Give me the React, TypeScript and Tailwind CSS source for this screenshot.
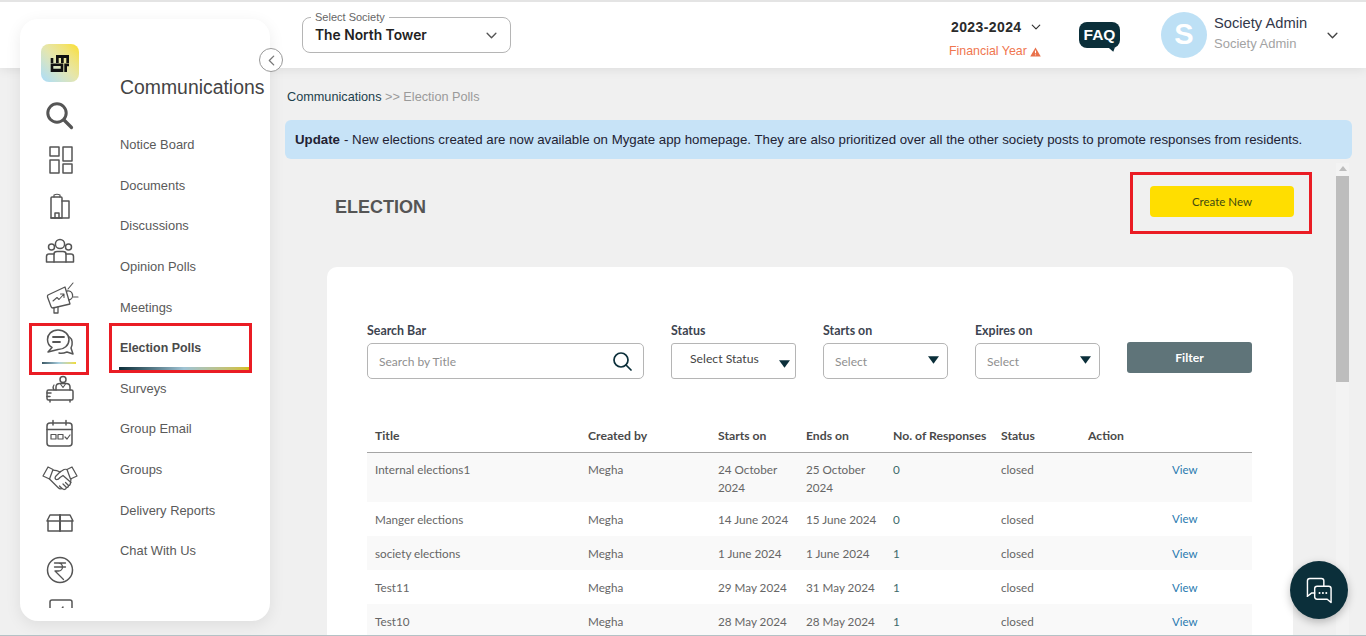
import React from "react";

const S = ({ children, sw = 1.5 }: { children: React.ReactNode; sw?: number }) => (
  <svg viewBox="0 0 40 40" className="w-10 h-10" fill="none" stroke="#555555" strokeWidth={sw} strokeLinecap="round" strokeLinejoin="round">
    {children}
  </svg>
);

const icons: React.ReactNode[] = [
  <S key="search">
    <circle cx="17" cy="18" r="9.2" strokeWidth={3} />
    <path d="M24 25 L31.500 32.500" strokeWidth={3.2} />
  </S>,
  <S key="grid">
    <rect x="10" y="7" width="9" height="9" />
    <rect x="23" y="7" width="9" height="14" />
    <rect x="10" y="20" width="9" height="13" />
    <rect x="23" y="24" width="9" height="9" />
  </S>,
  <S key="building">
    <path d="M11 32 V12 Q11 11 12 11 H21 Q22 11 22 12 V32 Z" />
    <path d="M22 15 H29 V32 H11" />
    <path d="M14 11 V9 Q17 7.500 20 9 V11" strokeWidth={1.2} />
    <path d="M15 32 V27 H19 V32" />
  </S>,
  <S key="people">
    <circle cx="20" cy="13" r="4.6" />
    <circle cx="11.500" cy="16" r="3" />
    <circle cx="28.500" cy="16" r="3" />
    <path d="M14 31 V23 Q14 20.500 17 20.500 H23 Q26 20.500 26 23 V31" />
    <path d="M14 23 H9 Q6.500 23 6.500 25.500 V31 H33.500 V25.500 Q33.500 23 31 23 H26" />
  </S>,
  <S key="mega" sw={1.3}>
    <path d="M8 18 L25 10 L30 27 L13 31 Q11.500 31 11 29.500 L7.500 20 Q7.300 18.600 8 18 Z" />
    <path d="M14 30.500 V36 H18 V30" />
    <path d="M13 24 L17 20.500 L19 22.500 L23.500 17.500 M20.500 17 H24 V20.500" strokeWidth={1.1} />
    <path d="M27 14 A4 4 0 0 1 29 23" />
    <path d="M33 6 L28 12 M33 20 H38" strokeWidth={1.1} />
  </S>,
  <S key="chat">
    <path d="M18 8 C11.500 8 7.500 12.500 7.500 17.500 C7.500 21 9.500 24 12 25.500 L8 30 L18 27.500 C24 27.500 29 23.500 29 17.500 C29 12.500 24.500 8 18 8 Z" />
    <path d="M13 15 H24 M13 20 H20" strokeWidth={1.8} />
    <path d="M29.500 15 C32.500 17 33 22 31 26 L33 32 L27 30 Q22 32 19 31" />
  </S>,
  <S key="desk">
    <circle cx="23" cy="11.500" r="3" />
    <path d="M16 22 V19 Q16 15.500 20 15.500 H26 Q30 15.500 30 19 V22" />
    <path d="M20.500 16 L23 19.500 L25.500 16" strokeWidth={1.1} />
    <path d="M14 22 Q12 19.500 14 17" strokeWidth={1.2} />
    <rect x="7" y="22" width="26" height="10" rx="1.500" />
    <path d="M7 25 H11 M7 28.500 H10 M10 32 V34 M30 32 V34" />
  </S>,
  <S key="cal">
    <rect x="7" y="10" width="25" height="23" rx="3" />
    <path d="M7 16.500 H32 M13 7.500 V12 M26 7.500 V12" />
    <rect x="11" y="21.500" width="5" height="4.500" strokeWidth={1.2} />
    <rect x="18" y="21.500" width="5" height="4.500" strokeWidth={1.2} />
    <path d="M25 24 L27 26 L30 22" strokeWidth={1.2} />
  </S>,
  <S key="hand" sw={1.25}>
    <path d="M3 17 L8 8 L13 10.500 L9.500 20 Z" />
    <path d="M37 17 L32 8 L27 10.500 L30.500 20 Z" />
    <path d="M13 11 Q17 11 20 13 L24 10.500 Q26 10 27 10.500" />
    <path d="M20.500 12.500 L15.500 17.500 Q14.500 19.500 16 20.500 Q18 21 20 18.500 L23 16.500 L31 23.500" />
    <path d="M9.500 20 L18 28.500 Q20 30.500 22 29.500 L24 30.500 Q26 30.500 26.500 28.500 Q28.500 28.500 28.500 26.500 Q30.500 26.500 30.500 23.500 L31 20" />
    <path d="M22 29.500 L19.500 27 M26.500 28.500 L23 25 M28.500 26.500 L25.500 23.500" />
  </S>,
  <S key="box">
    <path d="M8 17 V27 H32 V17" />
    <path d="M10 11 H30 L33 17 H7 Z" />
    <path d="M20 11 V27" strokeWidth={2} />
  </S>,
  <S key="rupee">
    <circle cx="20" cy="20" r="12.500" />
    <path d="M14.500 13 H25.500 M14.500 17 H25.500 M16 13 H18.500 A4 4 0 0 1 18.500 21 H15 L23.500 29.500" strokeWidth={1.3} />
  </S>,
  <S key="last">
    <rect x="10" y="5" width="22" height="22" rx="2" />
    <path d="M23 12 L21 15" />
  </S>,
];

const menu = ["Notice Board", "Documents", "Discussions", "Opinion Polls", "Meetings", "Election Polls", "Surveys", "Group Email", "Groups", "Delivery Reports", "Chat With Us"];

const rows = [
  ["Internal elections1", "Megha", "24 October 2024", "25 October 2024", "0"],
  ["Manger elections", "Megha", "14 June 2024", "15 June 2024", "0"],
  ["society elections", "Megha", "1 June 2024", "1 June 2024", "1"],
  ["Test11", "Megha", "29 May 2024", "31 May 2024", "1"],
  ["Test10", "Megha", "28 May 2024", "28 May 2024", "1"],
];

const Chevron = ({ className }: { className: string }) => (
  <svg viewBox="0 0 12 8" className={className} fill="none" stroke="currentColor" strokeWidth={1.6} strokeLinecap="round" strokeLinejoin="round">
    <path d="M1 1.500 L6 6.500 L11 1.500" />
  </svg>
);

const Caret = () => (
  <svg viewBox="0 0 10 7" className="w-[11px] h-[8px]" fill="#0b2f3a"><path d="M0 0 H10 L5 7 Z" /></svg>
);

export default function App() {
  return (
    <div className="relative h-[636px] w-[1366px] overflow-hidden bg-[#f0f0f0] border-t-2 border-t-[#e4e4e4] border-b border-b-[#b4c2c6] font-['Liberation_Sans',sans-serif]">
      {/* Header */}
      <header className="h-[66px] bg-white shadow-[0_2px_10px_rgba(0,0,0,0.08)] flex items-center pl-[302px] relative">
        <div className="relative w-[209px] h-[36px] border border-[#b5b5b5] rounded-lg flex items-center justify-between pl-3 pr-[13px]">
          <span className="absolute -top-[7px] left-[8px] bg-white px-1 text-[11px] leading-[12px] text-[#666666]">Select Society</span>
          <span className="text-[13.800px] font-semibold text-[#222222] font-['Inter',sans-serif]">The North Tower</span>
          <Chevron className="w-[11px] h-[7px] text-[#555555]" />
        </div>
        <div className="ml-[438px] w-[100px] h-full flex flex-col pt-[16px]">
          <div className="flex items-center pl-[2px]">
            <span className="text-[14px] leading-[18px] font-bold tracking-[0.4px] text-[#2b2b2b]">2023-2024</span>
            <Chevron className="w-[10px] h-[6px] ml-[9px] text-[#333333]" />
          </div>
          <div className="flex items-center mt-[8px]">
            <span className="text-[12.400px] leading-[15px] text-[#f0764f]">Financial Year</span>
            <svg viewBox="0 0 12 11" className="w-[11px] h-[10px] ml-[3px]">
              <path d="M6 0.500 L11.800 10.500 H0.200 Z" fill="#e9704a" />
              <path d="M6 3.800 V7 M6 8.300 V9.200" stroke="#fff" strokeWidth={1.200} />
            </svg>
          </div>
        </div>
        <div className="relative ml-[30px] w-[41px] h-[26px] bg-[#0b2f3a] rounded-lg flex items-center justify-center text-white text-[15.500px] font-bold">
          FAQ
          <svg viewBox="0 0 8 5" className="absolute -bottom-[4px] right-[5px] w-[7px] h-[5px]"><path d="M0 0 H8 L6 5 Z" fill="#0b2f3a" /></svg>
        </div>
        <div className="ml-[41px] w-[46px] h-[46px] rounded-full bg-[#bde0f5] flex items-center justify-center text-white text-[29px] font-bold">S</div>
        <div className="ml-[7px] w-[113px] flex flex-col -mt-[4px]">
          <span className="text-[14.700px] leading-[18px] text-[#33384a]">Society Admin</span>
          <span className="text-[13px] leading-[16px] mt-[4px] text-[#a3a3a3]">Society Admin</span>
        </div>
        <Chevron className="w-[11px] h-[7px] text-[#444444]" />
      </header>

      {/* Floating sidebar */}
      <aside className="absolute left-[20px] top-[17px] w-[250px] h-[602px] bg-white rounded-[18px] shadow-[0_4px_16px_rgba(0,0,0,0.08)] flex z-10">
        <div className="w-[78px] h-[589px] overflow-hidden flex flex-col items-center pt-[25px] shrink-0 ml-[1px]">
          <div className="relative w-[38px] h-[38px] rounded-lg bg-gradient-to-tr from-[#a9dcfb] via-[#e5e6ae] to-[#fbdf0d] shrink-0">
            <svg viewBox="0 0 38 38" className="w-full h-full" fill="#111111">
              <path d="M9.700 14 H12.300 V19 H9.700 Z" />
              <path d="M15 11 H28 V19 H25.300 V14 H22.700 V19 H20 V14 H17.700 V19 H15 Z" />
              <path d="M9.700 19.500 H22.300 V28 H9.700 Z M12.300 22 V24.700 H19.700 V22 Z" fillRule="evenodd" />
              <path d="M23.300 19.500 H28 V22.300 H26 V28 H23.300 Z" />
            </svg>
          </div>
          <div className="mt-[10px] flex flex-col items-center shrink-0">
            {icons.map((icon, i) => (
              <div key={i} className="relative h-[45.500px] w-[60px] flex items-center justify-center shrink-0">
                {icon}
                {i === 5 && <div className="absolute left-[12px] bottom-[1px] w-[34px] h-[2px] bg-gradient-to-r from-[#3d5a66] via-[#a9cfe0] to-[#f0dc2c]" />}
              </div>
            ))}
          </div>
        </div>
        <div className="flex-1 min-w-0 pt-[56px] pl-[21px]">
          <h2 className="text-[19.400px] leading-[24px] text-[#444444] mb-[25.600px] whitespace-nowrap">Communications</h2>
          <ul className="flex flex-col">
            {menu.map((m) => (
              <li key={m} className="h-[40.600px] flex items-center">
                <span className={m === "Election Polls" ? "text-[12.400px] font-bold text-[#4a4a4a]" : "text-[12.900px] text-[#5a5a5a]"}>{m}</span>
              </li>
            ))}
          </ul>
        </div>
        {/* Red highlight boxes */}
        <div className="absolute left-[9px] top-[304px] w-[60px] h-[52px] border-[3px] border-[#ea1c24]" />
        <div className="absolute left-[89px] top-[304px] w-[143px] h-[50px] border-[3px] border-[#ea1c24]">
          <div className="absolute left-[7px] right-0 bottom-0 h-[3px] bg-gradient-to-r from-[#0b2f3a] via-[#9fc3d4] to-[#d4be10]" />
        </div>
        {/* Collapse */}
        <button className="absolute left-[239px] top-[29px] w-6 h-6 rounded-full bg-white border border-[#999999] flex items-center justify-center">
          <svg viewBox="0 0 8 12" className="w-[7px] h-[11px]" fill="none" stroke="#777777" strokeWidth={1.500} strokeLinecap="round" strokeLinejoin="round"><path d="M6.500 1 L1.500 6 L6.500 11" /></svg>
        </button>
      </aside>

      {/* Main */}
      <main className="pl-[285px] pr-[14px] h-[567px] flex flex-col">
        <div className="pl-[2px] pt-[19px] text-[12.700px] leading-[20px] text-[#1c3f4c] whitespace-nowrap">
          Communications <span className="text-[#9a9a9a]">&gt;&gt; Election Polls</span>
        </div>
        <div className="mt-[13px] h-[39px] bg-[#c7e3f7] rounded-md flex items-center pl-[10px] text-[13.270px] text-[#222233] whitespace-nowrap">
          <span className="font-bold mr-1">Update</span> - New elections created are now available on Mygate app homepage. They are also prioritized over all the other society posts to promote responses from residents.
        </div>
        <div className="flex-1 min-h-0 flex pr-[3px] mt-[4px]">
          <div className="flex-1 min-w-0 overflow-hidden font-['Lato',sans-serif]">
            <div className="flex items-center justify-between mt-[9px] pl-[50px] pr-[24px] h-[62px]">
              <h1 className="mt-[9px] text-[18px] font-bold text-[#555555] font-['Liberation_Sans',sans-serif]">ELECTION</h1>
              <div className="w-[182px] h-[62px] border-[3px] border-[#ea1c24] flex items-start justify-center pt-[11px] pl-[2px]">
                <button className="w-[144px] h-[31px] bg-[#ffde00] rounded text-[11.500px] text-[#3f4a10]">Create New</button>
              </div>
            </div>
            <section className="ml-[42px] mr-[43px] mt-[33px] bg-white rounded-[10px] pl-[40px] pr-[41px] pt-[56px] h-[500px]">
              <div className="flex text-[12.400px]">
                <div className="w-[277px]">
                  <label className="block font-bold text-[#3d4450] leading-[16px] mb-[4px]">Search Bar</label>
                  <div className="h-[36px] border border-[#b5b5b5] rounded-[5px] flex items-center justify-between pl-[11px] pr-[11px]">
                    <input placeholder="Search by Title" className="outline-none bg-transparent w-[200px] pt-[2px] text-[12px] placeholder:text-[#8f8f8f]" />
                    <svg viewBox="0 0 20 20" className="w-[20px] h-[20px] -mt-[1px]" fill="none" stroke="#0b2f3a" strokeWidth={1.700} strokeLinecap="round"><circle cx="9" cy="9" r="7" /><path d="M14 14 L19 19" /></svg>
                  </div>
                </div>
                <div className="w-[125px] ml-[27px]">
                  <label className="block font-bold text-[#3d4450] leading-[16px] mb-[4px]">Status</label>
                  <div className="relative h-[36px] border border-[#b5b5b5] rounded-[3px] flex items-start pt-[6px] pl-[18px] text-[12.200px] text-[#444444]">
                    Select Status
                    <span className="absolute right-[5px] top-[16px]"><Caret /></span>
                  </div>
                </div>
                <div className="w-[125px] ml-[27px]">
                  <label className="block font-bold text-[#3d4450] leading-[16px] mb-[4px]">Starts on</label>
                  <div className="h-[36px] border border-[#b5b5b5] rounded-[5px] flex items-center justify-between pl-[11px] pr-[8px] text-[12px] text-[#8f8f8f]">
                    <span className="pt-[2px]">Select</span>
                    <span className="-mt-[3px]"><Caret /></span>
                  </div>
                </div>
                <div className="w-[125px] ml-[27px]">
                  <label className="block font-bold text-[#3d4450] leading-[16px] mb-[4px]">Expires on</label>
                  <div className="h-[36px] border border-[#b5b5b5] rounded-[5px] flex items-center justify-between pl-[11px] pr-[8px] text-[12px] text-[#8f8f8f]">
                    <span className="pt-[2px]">Select</span>
                    <span className="-mt-[3px]"><Caret /></span>
                  </div>
                </div>
                <button className="ml-[27px] mt-[19px] w-[125px] h-[31px] pt-[2px] bg-[#5f7479] rounded-[3px] text-white font-bold text-[12.200px]">Filter</button>
              </div>
              <table className="mt-[41px] w-[885px] table-fixed text-[11.700px] leading-[18px] text-left">
                <colgroup>
                  <col className="w-[213px]" /><col className="w-[130px]" /><col className="w-[88px]" /><col className="w-[87px]" /><col className="w-[108px]" /><col className="w-[87px]" /><col className="w-[84px]" /><col className="w-[88px]" />
                </colgroup>
                <thead>
                  <tr className="border-b border-[#a5a5a5] text-[#4a4a4a]">
                    {["Title", "Created by", "Starts on", "Ends on", "No. of Responses", "Status", "Action", ""].map((h, i) => (
                      <th key={i} className="pl-2 pr-0 pb-[7px] pt-[7px] text-[12.200px] font-bold whitespace-nowrap">{h}</th>
                    ))}
                  </tr>
                </thead>
                <tbody className="text-[#666666]">
                  {rows.map((r, i) => {
                    const pad = i === 0 ? "pl-2 pt-[7px] pb-[6px]" : "pl-2 py-[8px]";
                    const viewPad = i === 0 ? "pl-2 pt-[8px] pb-[5px]" : i === 1 ? "pl-2 py-[8px]" : "pl-2 pt-[9px] pb-[7px]";
                    return (
                      <tr key={i} className={i % 2 === 0 ? "bg-[#f9f9f9] align-top" : "bg-white align-top"}>
                        <td className={pad}>{r[0]}</td>
                        <td className={pad}>{r[1]}</td>
                        <td className={pad}>{r[2]}</td>
                        <td className={pad}>{r[3]}</td>
                        <td className={pad + " text-[#3d6a6a]"}>{r[4]}</td>
                        <td className={pad}>closed</td>
                        <td className={pad} />
                        <td className={viewPad + " text-[#2a7ab0] text-[11.500px]"}>View</td>
                      </tr>
                    );
                  })}
                </tbody>
              </table>
            </section>
          </div>
          <div className="w-[13px] shrink-0 flex flex-col items-center bg-[#f3f3f3]">
            <svg viewBox="0 0 8 5" className="w-[8px] h-[5px] mt-[3px]"><path d="M4 0 L8 5 H0 Z" fill="#bdbdbd" /></svg>
            <div className="w-full h-[206px] mt-[5px] bg-[#bdbdbd]" />
          </div>
        </div>
      </main>

      {/* Chat bubble */}
      <button className="absolute left-[1290px] top-[559px] w-[58px] h-[58px] rounded-full bg-[#0b2f3a] shadow-[0_3px_8px_rgba(0,0,0,0.25)] flex items-center justify-center z-20">
        <svg viewBox="0 0 28 28" className="w-[27px] h-[27px]" fill="none" stroke="#ffffff" strokeWidth={1.500} strokeLinecap="round" strokeLinejoin="round">
          <path d="M1.500 20 V4 Q1.500 1.500 4 1.500 H16 Q18.500 1.500 18.500 4 V9" />
          <path d="M1.500 20 L6 16.500 H9" />
          <path d="M9 12 Q9 9.500 11.500 9.500 H23.500 Q26 9.500 26 12 V26.500 L22 23 H11.500 Q9 23 9 20.500 Z" />
          <path d="M14 16.500 H14.100 M17.500 16.500 H17.600 M21 16.500 H21.100" strokeWidth={2} />
        </svg>
      </button>
    </div>
  );
}
